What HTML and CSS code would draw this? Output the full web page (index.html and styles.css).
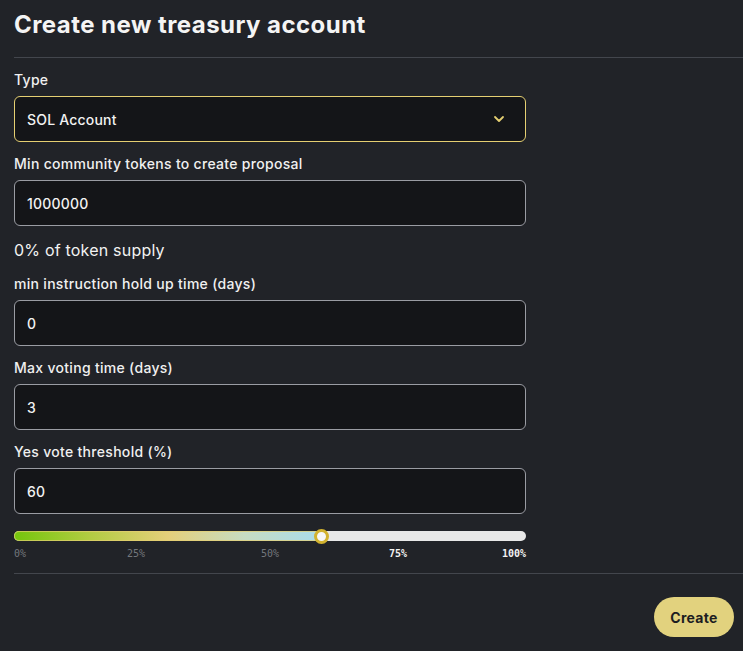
FILE: index.html
```html
<!DOCTYPE html>
<html>
<head>
<meta charset="utf-8">
<link rel="stylesheet" href="styles.css">
</head>
<body>
<div class="panel">
  <h1 class="title">Create new treasury account</h1>
  <div class="divider"></div>
  <div class="form">
    <div class="field">
      <label class="label">Type</label>
      <div class="select">
        <span>SOL Account</span>
        <svg class="chev" width="12" height="8" viewBox="0 0 12 8"><path d="M2 2 L6 6 L10 2" fill="none" stroke="#e5cf72" stroke-width="1.8" stroke-linecap="round" stroke-linejoin="round"/></svg>
      </div>
    </div>
    <div class="field">
      <label class="label">Min community tokens to create proposal</label>
      <div class="input">1000000</div>
    </div>
    <div class="supply">0% of token supply</div>
    <div class="field">
      <label class="label">min instruction hold up time (days)</label>
      <div class="input">0</div>
    </div>
    <div class="field">
      <label class="label">Max voting time (days)</label>
      <div class="input">3</div>
    </div>
    <div class="field">
      <label class="label">Yes vote threshold (%)</label>
      <div class="input">60</div>
    </div>
    <div class="slider">
      <div class="track">
        <div class="fill" style="width:60%"></div>
        <div class="thumb"></div>
      </div>
      <div class="ticks">
        <span class="tick">0%</span>
        <span class="tick">25%</span>
        <span class="tick">50%</span>
        <span class="tick on">75%</span>
        <span class="tick on">100%</span>
      </div>
    </div>
  </div>
  <div class="divider bottom"></div>
  <div class="actions">
    <button class="btn">Create</button>
  </div>
</div>
</body>
</html>
```
FILE: styles.css
```css
* { box-sizing: border-box; }
html, body { margin: 0; padding: 0; }
body {
  background: #212328;
  color: #f2f2f2;
  font-family: Inter, "Noto Sans", sans-serif;
  width: 743px;
  height: 651px;
  overflow: hidden;
}
.panel {
  padding: 9px 9px 0 14px;
}
.title {
  margin: 0;
  font-size: 24px;
  line-height: 32px;
  font-weight: 700;
  color: #f4f4f4;
  letter-spacing: 0.45px;
}
.divider {
  height: 1px;
  background: #43464d;
  margin: 16px -9px 0 0;
}
.divider.bottom { margin-top: 0; }
.form {
  width: 512px;
  padding-top: 12px;
  display: flex;
  flex-direction: column;
  gap: 12px;
}
.field {
  display: flex;
  flex-direction: column;
  gap: 6px;
}
.label {
  font-size: 14px;
  line-height: 20px;
  font-weight: 500;
  color: #f0f0f0;
  letter-spacing: 0.3px;
}
.input, .select {
  height: 46px;
  border: 1px solid #9a9ca3;
  border-radius: 6px;
  background: #141518;
  padding: 0 12px;
  display: flex;
  align-items: center;
  font-size: 14px;
  font-weight: 500;
  color: #f2f2f2;
  letter-spacing: 0.2px;
}
.select {
  border-color: #e5cf72;
  justify-content: space-between;
  padding-right: 20px;
}
.chev { display: block; }
.supply {
  font-size: 16px;
  line-height: 24px;
  color: #f2f2f2;
  letter-spacing: 0.2px;
}
.slider {
  padding-top: 5px;
  padding-bottom: 13px;
}
.track {
  position: relative;
  height: 10px;
  border-radius: 5px;
  background: #e8e8e8;
}
.fill {
  height: 10px;
  border-radius: 5px 0 0 5px;
  background: linear-gradient(90deg, #74c60c 0%, #b3cc43 25%, #e4cf7a 50%, #c7dcc2 75%, #a9dcec 100%);
  box-shadow: inset 0 0 0 1px rgba(229, 207, 114, 0.7);
}
.thumb {
  position: absolute;
  left: 60%;
  top: 50%;
  width: 15px;
  height: 15px;
  margin: -7.5px 0 0 -7.5px;
  border-radius: 50%;
  background: #f6f6f6;
  border: 3.5px solid #d2b22f;
}
.ticks {
  display: grid;
  grid-template-columns: 113px 134px 128px 113px 1fr;
  margin-top: 7px;
  font-family: "DejaVu Sans Mono", "Liberation Mono", monospace;
  font-size: 10px;
  line-height: 12px;
}
.tick { color: #74777d; }
.tick.on { color: #f2f2f2; font-weight: 700; }
.tick:last-child { text-align: right; }
.actions {
  display: flex;
  justify-content: flex-end;
  padding-top: 23px;
}
.btn {
  width: 80px;
  height: 40px;
  border: none;
  border-radius: 20px;
  background: #e2d27e;
  color: #1c1d21;
  font-family: Inter, sans-serif;
  font-weight: 700;
  font-size: 14px;
  letter-spacing: 0.3px;
  padding: 0;
}
```
